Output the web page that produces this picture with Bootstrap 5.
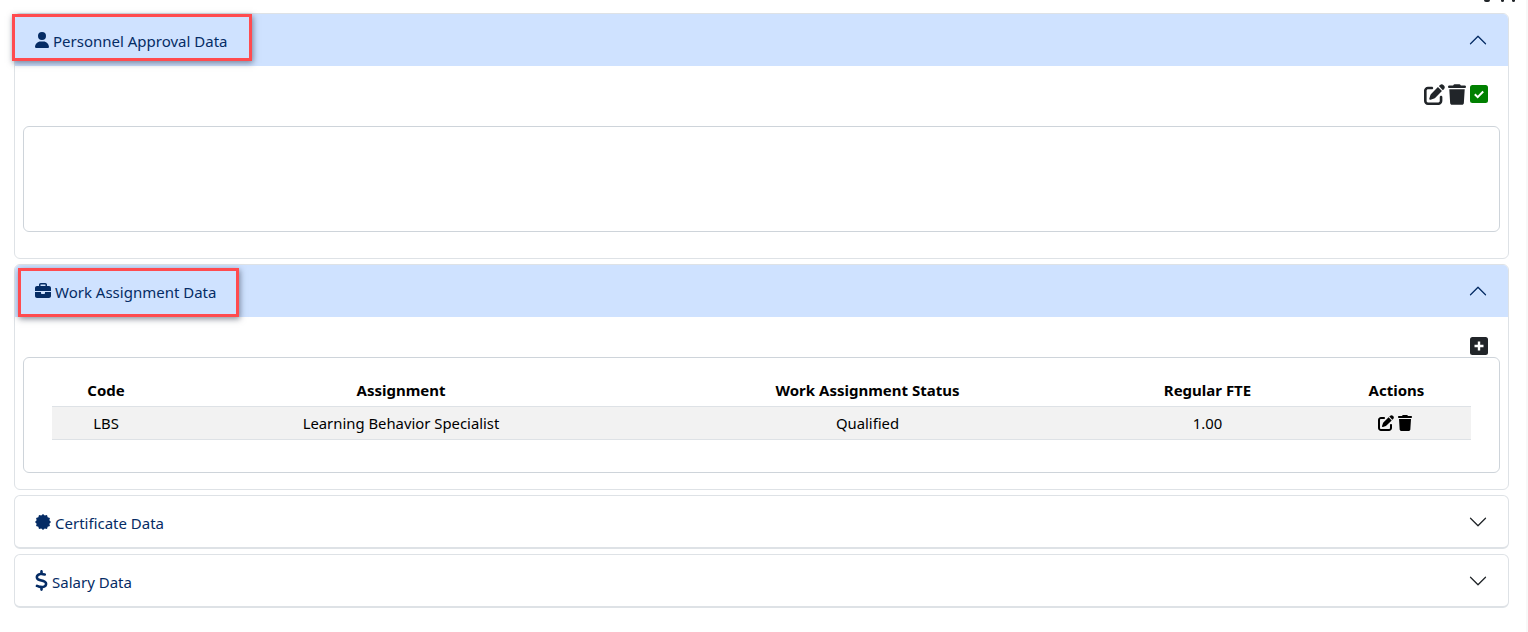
<!DOCTYPE html>
<html lang="en">
<head>
<meta charset="utf-8">
<title>Personnel</title>
<link href="https://cdn.jsdelivr.net/npm/bootstrap@5.3.0/dist/css/bootstrap.min.css" rel="stylesheet">
<style>
html,body{height:632px;overflow:hidden;background:#fff}
body{font-family:"Noto Sans","Open Sans",sans-serif;font-size:14px;color:#000;position:relative}
.page-wrap{padding:13px 19px 0 14px}
.top-cut{position:absolute;top:0;left:1484px;display:flex}
.top-cut i{display:block;height:2px;width:6px;background:#212529;border-radius:0 0 3px 3px;margin-right:11px}
.top-cut i+i{width:3px;margin-right:8px}
.side-strip{position:absolute;top:0;right:0;bottom:0;width:2px;background:#f8f8f8}
.acc-item{border:1px solid #dee2e6;border-radius:6px;margin-bottom:5px;background:#fff;overflow:hidden}
.acc-closed{border-bottom-width:2px}
.acc-head{height:52px;display:flex;align-items:center;padding:0 20px;color:#052c65;font-size:15px}
.acc-closed .acc-head{height:51px}
.acc-open .acc-head{background:#cfe2ff}
.acc-head .ttl{margin-left:4px;margin-top:2px}
.acc-closed .acc-head .ttl{margin-top:4px}
.acc-head .chev{margin-left:auto;flex:none}
.acc-body{padding:18px 8px 26px}
.acc-body2{padding:0 8px 16px}
.tool-row{height:20px;display:flex;justify-content:flex-end;align-items:center;gap:3px;padding-right:12px;margin-bottom:22px}
.tool-row .ok-ico{margin-left:1px}
.tool-row2{height:40px;display:flex;justify-content:flex-end;padding:20px 12px 0 0}
.empty-box{height:106px;border:1px solid #ced4da;border-radius:6px}
.tbl-box{border:1px solid #ced4da;border-radius:6px;padding:15px 28px 32px;height:116px}
.tbl-grid{margin:0;width:100%;table-layout:fixed;color:#000;font-size:14.85px}
.tbl-grid th,.tbl-grid td{text-align:center;vertical-align:middle;padding:2px 0 0;border:0}
.tbl-grid th{height:33px;font-weight:700;border-bottom:1px solid #dee2e6;font-size:15px}
.tbl-grid td{height:33px;background:#f2f2f2;border-bottom:1px solid #dee2e6}
.ico{display:block;flex:none}
.act-ico{display:inline-flex;gap:4px;align-items:center;vertical-align:middle;margin:0 4px 4px 0}
.note-box{position:absolute;border:3px solid #ff4b4f;box-shadow:1px 2px 6px rgba(40,50,70,.55);pointer-events:none}
.note-a{left:12px;top:14px;width:240px;height:47px}
.note-b{left:18px;top:268px;width:221px;height:49px}
</style>
</head>
<body>
<svg width="0" height="0" class="position-absolute">
<defs>
<symbol id="i-edit" viewBox="0 0 512 512"><path fill="currentColor" d="M471.6 21.7c-21.9-21.9-57.3-21.9-79.2 0L362.3 51.7l97.9 97.9 30.1-30.1c21.9-21.9 21.9-57.3 0-79.2L471.6 21.7zm-299.2 220c-6.1 6.1-10.8 13.6-13.5 21.9l-29.6 88.8c-2.9 8.6-.6 18.1 5.8 24.6s15.9 8.7 24.6 5.8l88.8-29.6c8.2-2.7 15.7-7.4 21.9-13.5L437.7 172.3 339.7 74.3 172.4 241.7zM96 64C43 64 0 107 0 160V416c0 53 43 96 96 96H352c53 0 96-43 96-96V320c0-17.7-14.3-32-32-32s-32 14.3-32 32v96c0 17.7-14.3 32-32 32H96c-17.7 0-32-14.3-32-32V160c0-17.7 14.3-32 32-32h96c17.7 0 32-14.3 32-32s-14.3-32-32-32H96z"/></symbol>
<symbol id="i-trash" viewBox="0 0 448 512"><path fill="currentColor" d="M135.2 17.7L128 32H32C14.3 32 0 46.3 0 64S14.3 96 32 96H416c17.7 0 32-14.3 32-32s-14.3-32-32-32H320l-7.2-14.3C307.4 6.8 296.3 0 284.2 0H163.8c-12.1 0-23.2 6.8-28.6 17.7zM416 128H32L53.2 467c1.6 25.3 22.6 45 47.9 45H346.9c25.3 0 46.3-19.7 47.9-45L416 128z"/></symbol>
<symbol id="i-chev" viewBox="0 0 16 16"><path fill="currentColor" fill-rule="evenodd" d="M1.646 4.646a.5.5 0 0 1 .708 0L8 10.293l5.646-5.647a.5.5 0 0 1 .708.708l-6 6a.5.5 0 0 1-.708 0l-6-6a.5.5 0 0 1 0-.708z"/></symbol>
</defs>
</svg>
<div class="top-cut"><i></i><i></i><i></i></div>
<div class="side-strip"></div>
<div class="page-wrap">
  <div class="acc-item acc-open">
    <div class="acc-head">
      <svg class="ico" width="14" height="16" viewBox="0 0 448 512" fill="#052c65"><path d="M224 256a128 128 0 1 0 0-256 128 128 0 1 0 0 256zm-45.700 48C79.800 304 0 383.800 0 482.300 0 498.700 13.300 512 29.700 512h388.600c16.400 0 29.700-13.300 29.700-29.700C448 383.800 368.200 304 269.700 304z"/></svg>
      <span class="ttl">Personnel Approval Data</span>
      <svg class="ico chev" width="20" height="20" style="transform:rotate(180deg)" color="#052c65"><use href="#i-chev"/></svg>
    </div>
    <div class="acc-body">
      <div class="tool-row">
        <svg class="ico" width="21" height="21" color="#212529"><use href="#i-edit"/></svg>
        <svg class="ico" width="18" height="21" color="#212529"><use href="#i-trash"/></svg>
        <svg class="ico ok-ico" width="18" height="18" viewBox="0 0 18 18"><rect width="18" height="18" rx="2.500" fill="#008000"/><path d="M4.800 9.200l2.900 2.900 5.500-5.600" fill="none" stroke="#fff" stroke-width="2"/></svg>
      </div>
      <div class="empty-box"></div>
    </div>
  </div>
  <div class="acc-item acc-open">
    <div class="acc-head">
      <svg class="ico" width="16" height="16" viewBox="0 0 512 512" fill="#052c65"><path d="M184 48h144c4.400 0 8 3.600 8 8v40H176V56c0-4.400 3.600-8 8-8zm-56 8v40H64C28.700 96 0 124.700 0 160v96h192 128 192v-96c0-35.300-28.700-64-64-64h-64V56c0-30.900-25.100-56-56-56H184c-30.900 0-56 25.100-56 56zM512 288H320v32c0 17.700-14.300 32-32 32h-64c-17.700 0-32-14.300-32-32v-32H0v128c0 35.300 28.700 64 64 64h384c35.300 0 64-28.700 64-64V288z"/></svg>
      <span class="ttl">Work Assignment Data</span>
      <svg class="ico chev" width="20" height="20" style="transform:rotate(180deg)" color="#052c65"><use href="#i-chev"/></svg>
    </div>
    <div class="acc-body2">
      <div class="tool-row2">
        <svg class="ico" width="18" height="18" viewBox="0 0 18 18"><rect width="18" height="18" rx="2.500" fill="#212529"/><path d="M9 4.500v9M4.500 9h9" stroke="#fff" stroke-width="2.400"/></svg>
      </div>
      <div class="tbl-box">
        <table class="table tbl-grid">
          <colgroup><col style="width:108px"><col style="width:482px"><col style="width:451px"><col style="width:229px"><col></colgroup>
          <thead><tr><th>Code</th><th>Assignment</th><th>Work Assignment Status</th><th>Regular FTE</th><th>Actions</th></tr></thead>
          <tbody><tr><td>LBS</td><td>Learning Behavior Specialist</td><td>Qualified</td><td>1.00</td><td><span class="act-ico"><svg class="ico" width="16" height="16" color="#000"><use href="#i-edit"/></svg><svg class="ico" width="14" height="16" color="#000"><use href="#i-trash"/></svg></span></td></tr></tbody>
        </table>
      </div>
    </div>
  </div>
  <div class="acc-item acc-closed">
    <div class="acc-head">
      <svg class="ico" width="16" height="16" viewBox="0 0 16 16" fill="#052c65"><polygon points="16,8 14.38,9.71 14.93,12 12.67,12.67 12,14.93 9.71,14.38 8,16 6.29,14.38 4,14.93 3.33,12.67 1.07,12 1.62,9.71 0,8 1.62,6.29 1.07,4 3.33,3.33 4,1.07 6.29,1.62 8,0 9.71,1.62 12,1.07 12.67,3.33 14.93,4 14.38,6.29"/></svg>
      <span class="ttl">Certificate Data</span>
      <svg class="ico chev" width="20" height="20" color="#212529"><use href="#i-chev"/></svg>
    </div>
  </div>
  <div class="acc-item acc-closed">
    <div class="acc-head">
      <svg class="ico" width="13" height="21" viewBox="0 0 320 512" fill="#052c65"><path d="M160 0c17.700 0 32 14.300 32 32v35.700c1.600.2 3.100.4 4.700.7.400.1.700.1 1.100.2l48 8.800c17.400 3.200 28.900 19.900 25.700 37.200s-19.900 28.900-37.200 25.700l-47.500-8.700c-31.300-4.600-58.900-1.500-78.300 6.200s-27.200 18.300-29 28.100c-2 10.700-.5 16.700 1.200 20.400 1.800 3.900 5.500 8.300 12.800 13.200 16.300 10.700 41.300 17.700 73.700 26.300l2.900.8c28.600 7.600 63.600 16.800 89.600 33.800 14.200 9.300 27.600 21.900 35.900 39.500 8.500 17.900 10.300 37.900 6.400 59.200-6.900 38-33.100 63.400-65.600 76.700-13.700 5.600-28.600 9.200-44.400 11V480c0 17.700-14.300 32-32 32s-32-14.300-32-32v-34.900c-.4-.1-.9-.1-1.300-.2h-.2c-24.400-3.800-64.500-14.300-91.500-26.300-16.100-7.200-23.400-26.100-16.200-42.200s26.100-23.400 42.200-16.200c20.900 9.300 55.300 18.500 75.200 21.600 31.900 4.700 58.200 2 76-5.300 16.900-6.900 24.600-16.900 26.800-28.900 1.900-10.600.4-16.700-1.300-20.400-1.900-4-5.600-8.400-13-13.300-16.400-10.700-41.500-17.700-74-26.300l-2.800-.7c-28.500-7.600-63.500-16.900-89.500-33.900-14.200-9.300-27.500-22-35.800-39.600-8.400-17.900-10.100-37.900-6.100-59.200C23.700 116 52.300 91.200 84.800 78.300c13.300-5.300 27.900-8.900 43.200-11V32c0-17.700 14.300-32 32-32z"/></svg>
      <span class="ttl">Salary Data</span>
      <svg class="ico chev" width="20" height="20" color="#212529"><use href="#i-chev"/></svg>
    </div>
  </div>
</div>
<div class="note-box note-a"></div>
<div class="note-box note-b"></div>
<script src="https://cdn.jsdelivr.net/npm/bootstrap@5.3.0/dist/js/bootstrap.bundle.min.js"></script>
</body>
</html>
